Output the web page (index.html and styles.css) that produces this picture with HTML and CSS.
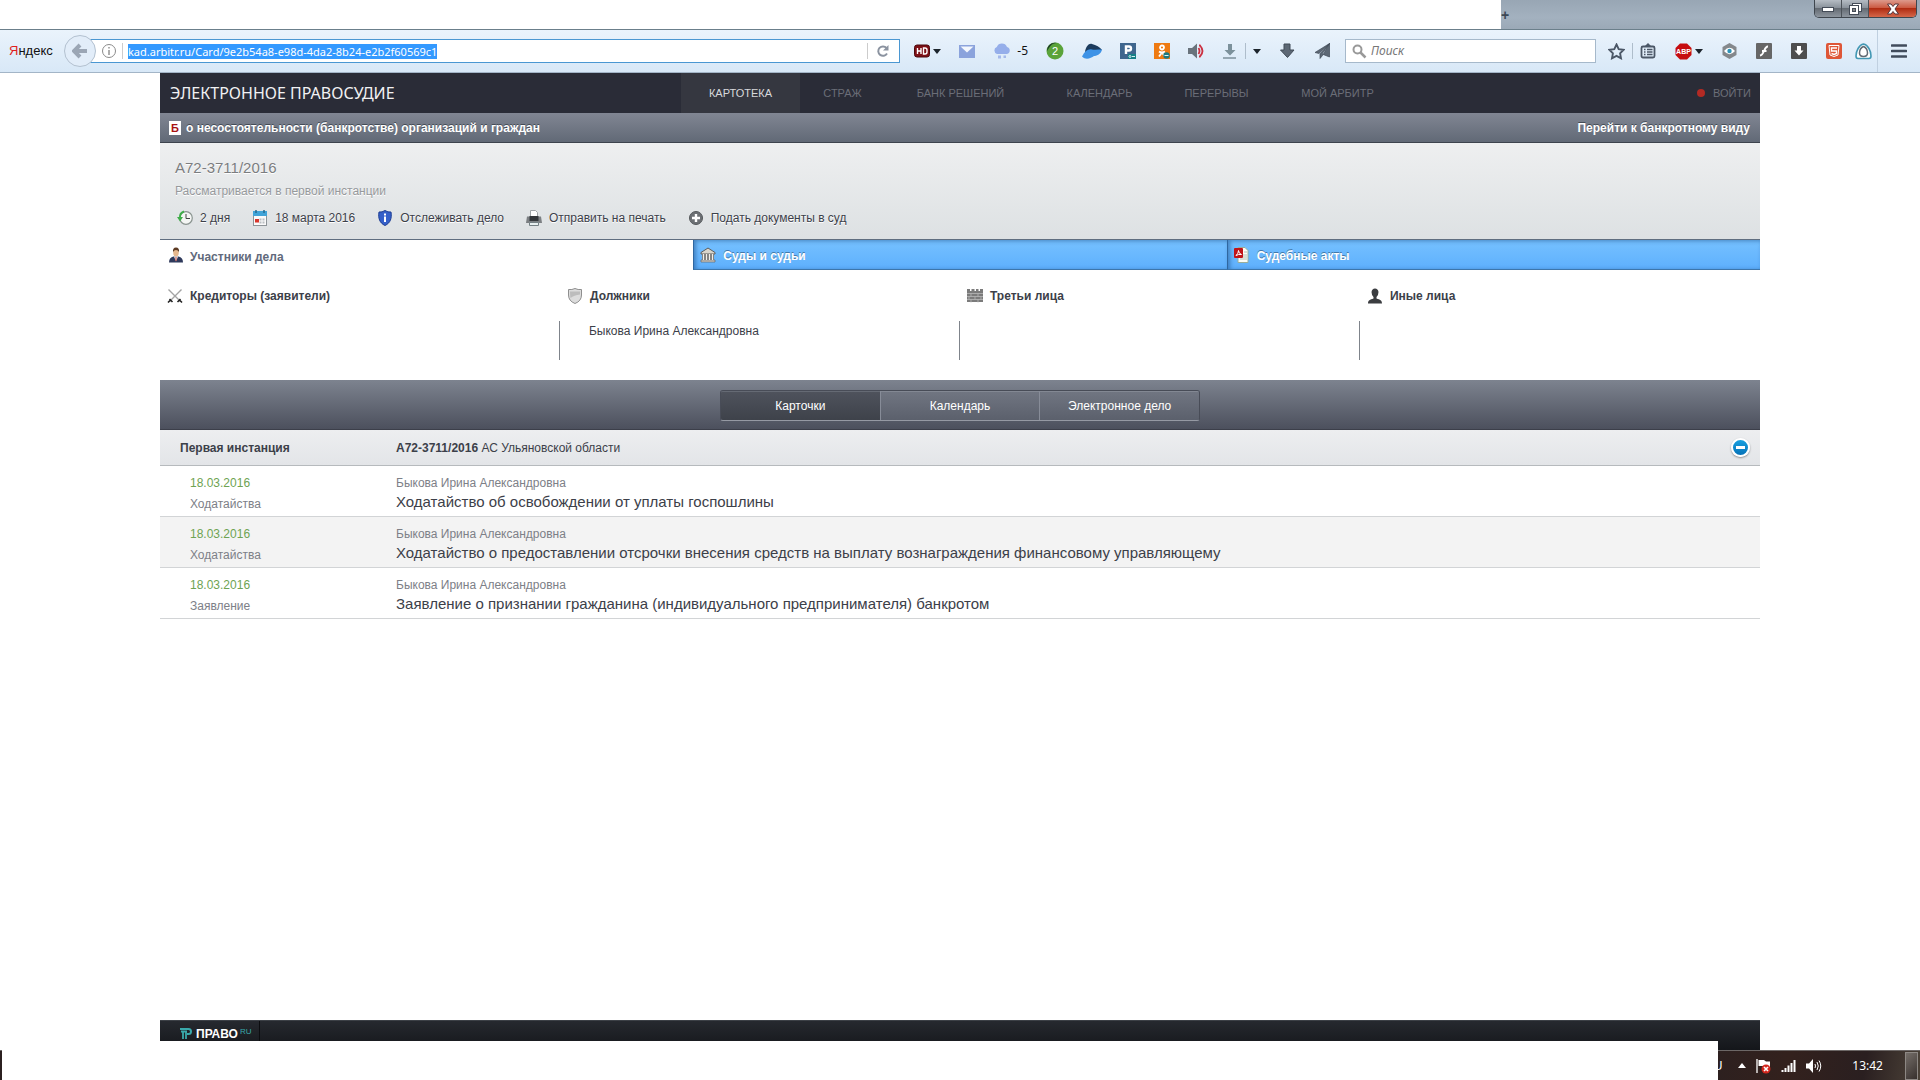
FILE: index.html
```html
<!DOCTYPE html>
<html lang="ru">
<head>
    <meta charset="UTF-8">
    <meta name="viewport" content="width=device-width, initial-scale=1.0">
    <title>А72-3711/2016 - Электронное правосудие</title>
    <link rel="stylesheet" href="styles.css">
</head>
<body>
    <div class="titlebar">
        <div class="tabs-blank"></div>
        <div class="glass">
            <span class="new-tab">+</span>
            <div class="window-buttons">
                <button class="win-btn" aria-label="Свернуть"><svg width="12" height="6"><rect x="0.5" y="1.5" width="11" height="4" fill="#fff" stroke="#444c58"/></svg></button>
                <button class="win-btn" aria-label="Развернуть"><svg width="13" height="12"><rect x="3.5" y="0.5" width="9" height="8" fill="#fff" stroke="#444c58"/><rect x="0.5" y="2.5" width="9" height="9" fill="#fff" stroke="#444c58"/><rect x="3.5" y="5.5" width="3" height="3" fill="#888" stroke="#444c58"/></svg></button>
                <button class="win-btn win-close" aria-label="Закрыть"><svg width="14" height="12" viewBox="0 0 14 12"><path d="M1.5 1h3.5l2 2.5L9 1h3.5L9 6l3.5 5H9L7 8.5 5 11H1.5L5 6z" fill="#fff" stroke="#54343a"/></svg></button>
            </div>
        </div>
    </div>

    <div class="toolbar">
        <a class="yandex" href="#"><span>Я</span>ндекс</a>
        <form class="address">
            <button type="button" class="back" aria-label="Назад"><svg width="16" height="16" viewBox="0 0 16 16"><path d="M8 2L2 8l6 6M2.5 8H15" fill="none" stroke="#9ba6b5" stroke-width="4"/></svg></button>
            <svg class="info" width="16" height="16" viewBox="0 0 16 16"><circle cx="8" cy="8" r="6.5" fill="none" stroke="#8b8b8b"/><path d="M8 7v5M8 4v1.5" stroke="#8b8b8b" stroke-width="1.4"/></svg>
            <div class="url"><span>kad.arbitr.ru/Card/9e2b54a8-e98d-4da2-8b24-e2b2f60569c1</span></div>
            <button type="button" class="reload" aria-label="Обновить"><svg width="14" height="14" viewBox="0 0 14 14"><path d="M11 9.5A4.7 4.7 0 1 1 10.5 4" fill="none" stroke="#8b93a0" stroke-width="2"/><path d="M12.5 1v5.5H7z" fill="#8b93a0"/></svg></button>
        </form>

        <div class="tools">
            <button class="tool" aria-label="HD">
                <svg width="16" height="14" viewBox="0 0 16 14"><rect x="0.5" y="1" width="15" height="12" rx="2.5" fill="#7d1016" stroke="#4c080c"/><path d="M3.5 4v6M7 4v6M3.5 7H7M9.5 4v6h1.5a2 2 0 0 0 2-2V6a2 2 0 0 0-2-2z" fill="none" stroke="#fff" stroke-width="1.4"/></svg>
                <svg class="caret" width="8" height="5"><path d="M0 0h8L4 5z" fill="#1c242c"/></svg>
            </button>
            <button class="tool" aria-label="Почта"><svg width="16" height="13" viewBox="0 0 16 13"><rect width="16" height="13" fill="#8ba3dc"/><path d="M1.5 1.5h13L8 7.5z" fill="#f3f7fd"/></svg></button>
            <button class="tool weather">
                <svg width="18" height="17" viewBox="0 0 18 17"><path d="M4 11a3.7 3.7 0 0 1-.2-7A5.5 5.5 0 0 1 14 4a3.6 3.6 0 0 1 0 7z" fill="#95aeea"/><path d="M5 12.5h3v3H5zM10.5 12.5h2.5v2.5h-2.5z" fill="#a4b8ea"/></svg>
                -5
            </button>
            <button class="tool" aria-label="Уведомления"><svg width="18" height="18" viewBox="0 0 18 18"><circle cx="9" cy="9" r="8.5" fill="#5aa33a"/><path d="M1 9a8 8 0 0 1 10-8C5 1 4 5 1 9z" fill="#1d3a2a"/><text x="9" y="13" class="badge-num">2</text></svg></button>
            <button class="tool" aria-label="Облако"><svg width="20" height="17" viewBox="0 0 20 17"><path d="M3 9C4 3 7 0 10 1c4 1 8 3 10 6l-8 2z" fill="#1c3c5e"/><path d="M0 13.5C3 8 6 5.500 10 6.500c3 .5 7 0 10 0-1 5-6 6.500-8 6.500-3 2-8 4.500-12 .5z" fill="#3d92e6"/></svg></button>
            <button class="tool" aria-label="P"><svg width="16" height="16" viewBox="0 0 16 16"><rect width="16" height="16" fill="#3f668e"/><path d="M6 11V3.5h3a2 2 0 0 1 0 4H6" fill="none" stroke="#fff" stroke-width="2.4"/><path d="M8 11h8v5H8z" fill="#167f86"/><path d="M9 13.5a1 1 0 1 0 2 0a1 1 0 1 0-2 0M12 13.5h3" fill="none" stroke="#d8f0f0"/></svg></button>
            <button class="tool" aria-label="Одноклассники"><svg width="16" height="16" viewBox="0 0 16 16"><rect width="16" height="16" fill="#ee7a12"/><circle cx="8" cy="4.5" r="2" fill="none" stroke="#fff" stroke-width="1.8"/><path d="M5 8.500q3 2 6 0M8 9.500l-3 4M8 9.500l3 4" fill="none" stroke="#fff" stroke-width="1.8"/><circle cx="12.500" cy="12.500" r="3.200" fill="#1c7a80"/><path d="M10.500 12.500h4" stroke="#e4f4f4"/></svg></button>
            <button class="tool" aria-label="Звук"><svg width="16" height="16" viewBox="0 0 16 16"><path d="M0 5h4l5-4.5v15L4 11H0z" fill="#69737c"/><path d="M10.500 5q2 3 0 6M11 2.500h1q5 5.500 0 11h-1" fill="none" stroke="#cb3040" stroke-width="1.8"/></svg></button>
            <button class="tool" aria-label="Загрузить">
                <svg width="16" height="16" viewBox="0 0 16 16"><path d="M6 1h4v6h3.5L8 12.500 2.500 7H6z" fill="#7c919b"/><path d="M1 15h13" stroke="#7c919b" stroke-width="1.5"/></svg>
                <i class="sep"></i>
                <svg class="caret" width="8" height="5"><path d="M0 0h8L4 5z" fill="#1c242c"/></svg>
            </button>
            <button class="tool" aria-label="Загрузки"><svg width="17" height="16" viewBox="0 0 17 16"><path d="M5 1h6v6h4l-6.500 7.500L1.500 7H5z" fill="#5d6875" stroke="#414b57"/></svg></button>
            <button class="tool" aria-label="Отправить"><svg width="17" height="16" viewBox="0 0 17 16"><path d="M15.500.5L1 9.500l4 1zM15.500.5L6 11v4.500l2.500-3zM15.500.5V14L8 11z" fill="#5d6875" stroke="#414b57" stroke-width=".7"/></svg></button>
        </div>

        <div class="search">
            <svg width="15" height="15" viewBox="0 0 15 15"><circle cx="5.500" cy="5.500" r="4" fill="none" stroke="#999" stroke-width="2"/><path d="M8.500 8.500l5 5" stroke="#999" stroke-width="2.5"/></svg>
            <input type="text" placeholder="Поиск" aria-label="Поиск">
        </div>

        <div class="tools tools-right">
            <button class="tool" aria-label="Закладки">
                <svg width="17" height="17" viewBox="0 0 17 17"><path d="M8.500 1.500l2.200 4.600 5 .7-3.600 3.500.9 5-4.500-2.400L4 15.300l.9-5L1.300 6.800l5-.7z" fill="none" stroke="#4b5767" stroke-width="1.9"/></svg>
                <i class="sep"></i>
                <svg width="16" height="16" viewBox="0 0 16 16"><path d="M3 3.500h10a1.500 1.500 0 0 1 1.500 1.500v8a1.500 1.500 0 0 1-1.500 1.500H3A1.500 1.500 0 0 1 1.500 13V5A1.500 1.500 0 0 1 3 3.500z" fill="none" stroke="#4b5767" stroke-width="1.800"/><path d="M5 3L8 0l3 3z" fill="#4b5767"/><path d="M4 6.500h1.500M4 9h1.500M4 11.500h1.500M7 6.500h5.500M7 9h5.500M7 11.500h5.500" stroke="#4b5767" stroke-width="1.300"/></svg>
            </button>
            <button class="tool" aria-label="Adblock Plus">
                <svg width="17" height="17" viewBox="0 0 17 17"><path d="M5 .5h7L16.500 5v7L12 16.500H5L.5 12V5z" fill="#c60d10"/><text x="8.500" y="11" class="abp">ABP</text></svg>
                <svg class="caret" width="8" height="5"><path d="M0 0h8L4 5z" fill="#1c242c"/></svg>
            </button>
            <button class="tool" aria-label="Просмотр"><svg width="15" height="16" viewBox="0 0 15 16"><path d="M7.500 0l7 4v8l-7 4-7-4V4z" fill="#84888c"/><path d="M2 8q5.500-6.500 11 0-5.500 6.500-11 0z" fill="#fff"/><circle cx="7.500" cy="8" r="2.200" fill="#2e93b8"/></svg></button>
            <button class="tool" aria-label="Flash"><svg width="16" height="16" viewBox="0 0 16 16"><rect width="16" height="16" rx="1" fill="#666"/><path d="M12 3.500c-4-.5-3.500 8.500-8 9M6 8h4.500" fill="none" stroke="#fff" stroke-width="1.8"/></svg></button>
            <button class="tool" aria-label="Скачать"><svg width="16" height="16" viewBox="0 0 16 16"><rect width="16" height="16" rx="1" fill="#4e4e4e"/><path d="M6 3h4v4.500h2.500L8 12.500 3.500 7.500H6z" fill="#fff"/></svg></button>
            <button class="tool" aria-label="HTML5"><svg width="16" height="16" viewBox="0 0 16 16"><rect width="16" height="16" rx="2" fill="#de5637"/><path d="M3 2.500h10l-1 9.500-4 1.500L4 12z" fill="none" stroke="#fff"/><path d="M11 5H5.500v3h5v2.500L8 11.500l-2.500-1" fill="none" stroke="#fff" stroke-width="1.4"/></svg></button>
            <button class="tool" aria-label="Расширение"><svg width="17" height="17" viewBox="0 0 17 17"><path d="M8.500 1C13 2 16 8 16 13q0 2.500-2 2.500H3q-2 0-2-2.500C1 8 4 2 8.500 1z" fill="#fff" stroke="#4398b4" stroke-width="1.6"/><path d="M8.500 3.500c2.500 1 4 4 4 6.500s-1.500 3.500-4 3.500-4-1-4-3.500 1.500-5.500 4-6.500z" fill="none" stroke="#626b74" stroke-width="1.5"/></svg></button>
        </div>
        <button class="tool menu" aria-label="Меню"><svg width="16" height="14" viewBox="0 0 16 14"><path d="M1 1.500h14M1 7h14M1 12.500h14" stroke="#414c5c" stroke-width="2.6" stroke-linecap="round"/></svg></button>
    </div>

    <div class="page">
        <header class="header">
            <h1>ЭЛЕКТРОННОЕ ПРАВОСУДИЕ</h1>
            <nav class="nav">
                <a class="active" href="#">КАРТОТЕКА</a>
                <a href="#">СТРАЖ</a>
                <a href="#">БАНК РЕШЕНИЙ</a>
                <a href="#">КАЛЕНДАРЬ</a>
                <a href="#">ПЕРЕРЫВЫ</a>
                <a href="#">МОЙ АРБИТР</a>
            </nav>
            <a class="login" href="#">ВОЙТИ</a>
        </header>

        <div class="band">
            <span class="b-icon">Б</span>
            <span>о несостоятельности (банкротстве) организаций и граждан</span>
            <a href="#">Перейти к банкротному виду</a>
        </div>

        <section class="case">
            <h2>А72-3711/2016</h2>
            <p>Рассматривается в первой инстанции</p>
            <ul class="actions">
                <li>
                    <svg width="16" height="16" viewBox="0 0 16 16"><circle cx="9" cy="8" r="6.300" fill="#f4f6f4" stroke="#8a9490" stroke-width="1.2"/><path d="M9 4v4.500h4" fill="none" stroke="#444"/><path d="M7 1.500Q2.500 3 3 8" fill="none" stroke="#3fae49" stroke-width="2"/><path d="M0 7h6l-3 4.500z" fill="#3fae49"/></svg>
                    2 дня
                </li>
                <li>
                    <svg width="16" height="16" viewBox="0 0 16 16"><rect x="1.500" y="1.500" width="13" height="14" fill="#fafafa" stroke="#8d9498"/><path d="M1 1h14v5H1z" fill="#41a4d8"/><path d="M4 0v3M12 0v3" stroke="#26698e" stroke-width="1.5"/><path d="M7.500 8.500h2v2h-2zM10.500 8.500h2v2h-2zM7.500 11.500h2v2h-2zM10.500 11.500h2v2h-2z" fill="#b9bec2"/><path d="M3 9h4v3.500H3z" fill="#d8362c"/></svg>
                    18 марта 2016
                </li>
                <li>
                    <a href="#"><svg width="16" height="16" viewBox="0 0 16 16"><path d="M8 .5q3 2 6 1.500c1 6-.5 11-6 13.500C2.500 13 1 8 2 2q3 .5 6-1.500z" fill="#3560c9" stroke="#1d3d93"/><path d="M8 6.500V12M8 3.500v2" stroke="#fff" stroke-width="2"/></svg>
                    Отслеживать дело</a>
                </li>
                <li>
                    <a href="#"><svg width="16" height="16" viewBox="0 0 16 16"><path d="M4.500 7V.5h5l2 2V7z" fill="#fff" stroke="#a0a5a8"/><path d="M1 6.500h14l1 6.500H0z" fill="#7c8083"/><path d="M3.500 6h9v5h-9z" fill="#33373a"/><path d="M3.500 12.500h9v3h-9z" fill="#e8f0f0" stroke="#748084"/></svg>
                    Отправить на печать</a>
                </li>
                <li>
                    <a href="#"><svg width="16" height="16" viewBox="0 0 16 16"><circle cx="8" cy="8" r="6.500" fill="#6c7074" stroke="#54585b"/><path d="M8 4v8M4 8h8" stroke="#fff" stroke-width="2.4"/></svg>
                    Подать документы в суд</a>
                </li>
            </ul>
        </section>

        <div class="tabs">
            <button class="tab selected">
                <svg width="16" height="16" viewBox="0 0 16 16"><path d="M1 15.500q0-5 4.500-6h5q4.500 1 4.500 6z" fill="#2f3a5c"/><path d="M6 9.500h4l-2 5z" fill="#fff"/><path d="M7.500 10h1v4h-1z" fill="#c03a2c"/><ellipse cx="8" cy="5.500" rx="2.800" ry="4" fill="#e7b88e"/><path d="M5 5Q4.500.5 8 .5T11 5Q10 3 8 3T5 5z" fill="#5c3a22"/></svg>
                <span>Участники дела</span>
            </button>
            <button class="tab">
                <svg width="16" height="16" viewBox="0 0 16 16"><path d="M8 1l7 4.500v1.500H1V5.500z" fill="#d9d5cc" stroke="#5c5c5c"/><path d="M1 13h14v2H1z" fill="#d4d0c8" stroke="#666" stroke-width=".7"/><path d="M2 7h12v6H2z" fill="#6a6a6a"/><path d="M3.500 7v6M6.500 7v6M9.500 7v6M12.500 7v6" stroke="#f0eee9" stroke-width="1.4"/></svg>
                <span>Суды и судьи</span>
            </button>
            <button class="tab">
                <svg width="16" height="16" viewBox="0 0 16 16"><path d="M4 .5h7l3 3v12H4z" fill="#fbfdf6" stroke="#9aae9a"/><path d="M9 8h4M9 10h4M6 12h7M10 5h3" stroke="#b4beb4"/><rect y="1" width="9" height="10" rx="1" fill="#c01418"/><path d="M2 8.500q2.500-2 2.500-5 0 3 3 4-3-.5-5.500 1z" fill="none" stroke="#fff"/></svg>
                <span>Судебные акты</span>
            </button>
        </div>

        <section class="sides">
            <div class="side">
                <h3><svg width="16" height="16" viewBox="0 0 16 16"><path d="M1.500 1.500l12 12M14.500 1.500l-12 12" stroke="#a3a3a3" stroke-width="1.4"/><path d="M2.500 11l3 3M13.500 11l-3 3M1 14.500l2-2M15 14.500l-2-2" stroke="#222" stroke-width="1.6"/></svg>
                Кредиторы (заявители)</h3>
                <div class="people"></div>
            </div>
            <div class="side">
                <h3><svg width="16" height="16" viewBox="0 0 16 16"><path d="M1.500 1.500Q5 2 8 .5q3 1.500 6.500 1V7q0 6-6.500 8.500Q1.500 13 1.500 7z" fill="#dcdcdc" stroke="#8e8e8e"/><path d="M3 3.500h10v3Q7 7 3.500 10 3 7 3 3.500z" fill="#bcbcbc"/></svg>
                Должники</h3>
                <div class="people">Быкова Ирина Александровна</div>
            </div>
            <div class="side">
                <h3><svg width="16" height="16" viewBox="0 0 16 16"><path d="M0 1h3v2h1.500V1h3v2H9V1h2.500v2H13V1h3v13H0z" fill="#7b7b7b"/><path d="M0 5.500h16M0 8.500h16M0 11.500h16M4 5.500v3M11 5.500v3M2 8.500v3M8 8.500v3M14 8.500v3M4 11.500v3M11 11.500v3" stroke="#b7b7b7" stroke-width=".8"/></svg>
                Третьи лица</h3>
                <div class="people"></div>
            </div>
            <div class="side">
                <h3><svg width="16" height="16" viewBox="0 0 16 16"><path d="M1 15.500c0-3 2-4 5.500-5V9Q4.500 7 4.500 4 5 .5 8 .5T11.500 4q0 3-2 5v1.500c3.500 1 5.500 2 5.500 5z" fill="#3b3d40"/></svg>
                Иные лица</h3>
                <div class="people"></div>
            </div>
        </section>

        <div class="views">
            <div class="switch">
                <button class="on">Карточки</button>
                <button>Календарь</button>
                <button>Электронное дело</button>
            </div>
        </div>

        <div class="instance">
            <b class="level">Первая инстанция</b>
            <span class="court"><b>А72-3711/2016</b> АС Ульяновской области</span>
            <button class="collapse" aria-label="Свернуть"></button>
        </div>

        <table class="docs">
            <tr>
                <td class="when"><span class="date">18.03.2016</span><span class="type">Ходатайства</span></td>
                <td><span class="who">Быкова Ирина Александровна</span><span class="what">Ходатайство об освобождении от уплаты госпошлины</span></td>
            </tr>
            <tr>
                <td class="when"><span class="date">18.03.2016</span><span class="type">Ходатайства</span></td>
                <td><span class="who">Быкова Ирина Александровна</span><span class="what">Ходатайство о предоставлении отсрочки внесения средств на выплату вознаграждения финансовому управляющему</span></td>
            </tr>
            <tr>
                <td class="when"><span class="date">18.03.2016</span><span class="type">Заявление</span></td>
                <td><span class="who">Быкова Ирина Александровна</span><span class="what">Заявление о признании гражданина (индивидуального предпринимателя) банкротом</span></td>
            </tr>
        </table>

        <footer class="footer">
            <a class="pravo" href="#">
                <svg width="12" height="11" viewBox="0 0 12 11"><path d="M0 1h8.500a2.500 2.500 0 0 1 0 5H7" fill="none" stroke="#3aa9ab" stroke-width="2"/><path d="M1 3.500h6M3 4v7M6 4v7" fill="none" stroke="#3aa9ab" stroke-width="1.800"/></svg>
                <b>ПРАВО</b><sup>RU</sup>
            </a>
        </footer>
    </div>

    <div class="taskbar">
        <span class="lang">U</span>
        <svg width="8" height="5"><path d="M0 5h8L4 0z" fill="#fff"/></svg>
        <svg width="15" height="16" viewBox="0 0 15 16"><path d="M1 1v14" stroke="#fff" stroke-width="1.3"/><path d="M2.500 2H8l2 1.500h4V9H8L7 8H2.500z" fill="#fff"/><circle cx="10" cy="11" r="4.500" fill="#d3281e"/><path d="M8 9l4 4M12 9l-4 4" stroke="#fff" stroke-width="1.6"/></svg>
        <svg width="15" height="12" viewBox="0 0 15 12"><path d="M1.500 10v2M4.500 8v4M7.500 5.500V12M10.500 3v9M13.500 0v12" stroke="#fff" stroke-width="2"/></svg>
        <svg width="16" height="14" viewBox="0 0 16 14"><path d="M0 4.500h3L7 0v14L3 9.500H0z" fill="#fff"/><path d="M9 5q1 2 0 4M11 3q2.500 4 0 8M13 1.500q3.500 5.500 0 11" fill="none" stroke="#fff"/></svg>
        <time>13:42</time>
        <button class="show-desktop" aria-label="Свернуть все окна"></button>
        <div class="cover"></div>
    </div>
</body>
</html>
```
FILE: styles.css
```css
* {
    box-sizing: border-box;
}

body {
    margin: 0;
    min-height: 100vh;
    display: flex;
    flex-direction: column;
    background: #fff;
    color: #3c4049;
    font: 12px/18px "Liberation Sans", Arial, sans-serif;
}

button {
    font: inherit;
    color: inherit;
    border: 0;
    padding: 0;
    background: none;
    cursor: pointer;
}

a {
    color: inherit;
    text-decoration: none;
}

h1, h2, h3, p, ul {
    margin: 0;
    padding: 0;
}

svg {
    display: block;
    flex: none;
}

/* window frame */
.titlebar {
    display: flex;
    height: 29px;
}

.tabs-blank {
    flex: 1;
}

.glass {
    display: flex;
    justify-content: space-between;
    align-items: flex-start;
    width: 419px;
    padding-right: 3px;
    background: linear-gradient(#98a6b4, #a3b1bf 60%, #9ba9b7);
}

.new-tab {
    color: #3c4854;
    font-size: 14px;
    font-weight: bold;
    line-height: 30px;
}

.window-buttons {
    display: flex;
    height: 18px;
    border: 1px solid #3f464e;
    border-top: 0;
    border-radius: 0 0 5px 5px;
    overflow: hidden;
}

.win-btn {
    display: flex;
    align-items: center;
    justify-content: center;
    width: 27px;
    background: linear-gradient(#b5bcc4, #8a929b 45%, #646b73 50%, #8d959e);
    border-right: 1px solid #4c5259;
}

.win-close {
    width: 47px;
    border-right: 0;
    background: linear-gradient(#dd9a8c, #cc5b43 45%, #b02c12 50%, #d5674a);
}

/* browser toolbar */
.toolbar {
    display: flex;
    align-items: center;
    height: 44px;
    padding: 0 13px 0 9px;
    border-top: 1px solid #6b7f8b;
    border-bottom: 1px solid #a3b5c7;
    background: linear-gradient(#eaf3fc, #d8e8f7);
    color: #111;
}

.yandex {
    width: 55px;
    font-size: 13px;
    line-height: 20px;
}

.yandex span {
    color: #e01f1f;
}

.address {
    display: flex;
    align-items: center;
    flex: 1;
}

.back {
    position: relative;
    display: flex;
    align-items: center;
    justify-content: center;
    width: 32px;
    height: 32px;
    margin-right: -8px;
    border: 1px solid #b3c1d0;
    border-radius: 50%;
    background: #e2edf9;
}

.info {
    order: 1;
    width: 34px;
    height: 24px;
    padding: 3px 4px 3px 12px;
    border: solid #4a97d2;
    border-width: 1px 0;
    background: #fff;
}

.url {
    order: 2;
    flex: 1;
    height: 24px;
    padding: 4px 0 4px 6px;
    border: solid #4a97d2;
    border-width: 1px 0;
    background: linear-gradient(#ccc, #ccc) 0 50% / 1px 16px no-repeat #fff;
    font: 11px/15px "Noto Sans", sans-serif;
}

.url span {
    display: inline-block;
    height: 15px;
    background: #3399ff;
    color: #fff;
}

.reload {
    order: 3;
    display: flex;
    align-items: center;
    justify-content: center;
    width: 33px;
    height: 24px;
    border: 1px solid #4a97d2;
    border-left: 0;
    background: linear-gradient(#ccc, #ccc) 0 50% / 1px 16px no-repeat #fff;
}

.tools {
    display: flex;
    align-items: center;
    gap: 18px;
    padding: 0 14px;
}

.tools-right {
    gap: 19px;
    padding: 0 5px 0 12px;
}

.tools-right .tool:last-child {
    margin-left: -6px;
}

.tool {
    display: flex;
    align-items: center;
    gap: 3px;
}

.tool .sep {
    width: 1px;
    height: 16px;
    margin: 0 4px;
    background: #aebdcb;
}

.weather {
    gap: 6px;
    font: 12px/16px "Noto Sans", sans-serif;
}

.badge-num {
    font: 11px "Liberation Sans", sans-serif;
    fill: #fff;
    text-anchor: middle;
}

.abp {
    font: bold 7px "Liberation Sans", sans-serif;
    fill: #fff;
    text-anchor: middle;
}

.search {
    display: flex;
    align-items: center;
    gap: 4px;
    width: 251px;
    height: 24px;
    padding-left: 6px;
    border: 1px solid #a6b9cb;
    background: #fff;
}

.search input {
    flex: 1;
    min-width: 0;
    border: 0;
    padding: 0;
    outline: none;
    background: none;
    font: italic 12px/18px "Noto Sans", sans-serif;
}

.search input::placeholder {
    color: #777;
}

.menu {
    height: 42px;
    padding-left: 13px;
    border-left: 1px solid #c0d0e0;
}

/* site */
.page {
    flex: 1;
    display: flex;
    flex-direction: column;
    width: 83.3333%;
    margin: 0 auto;
}

.header {
    display: flex;
    align-items: stretch;
    height: 40px;
    padding: 0 9px 0 10px;
    background: #2a2c37;
    line-height: 40px;
}

.header h1 {
    width: 511px;
    color: #f1f1f3;
    font: 16px/40px "Noto Sans", sans-serif;
}

.nav {
    display: grid;
    grid-template-columns: 119px 85px 151px 127px 107px 135px;
    flex: 1;
    font-size: 11px;
    color: #6b6e78;
    text-align: center;
}

.nav .active {
    background: #353740;
    color: #d8d9dc;
}

.login {
    display: flex;
    align-items: center;
    gap: 8px;
    color: #6b6e78;
    font-size: 11px;
}

.login::before {
    content: "";
    width: 8px;
    height: 8px;
    border-radius: 50%;
    background: #b32a24;
}

.band {
    display: flex;
    align-items: center;
    gap: 5px;
    height: 30px;
    padding: 1px 10px 0 9px;
    border-bottom: 1px solid #3d434d;
    background: linear-gradient(#818693, #616976);
    color: #fff;
    font-weight: bold;
    text-shadow: 0 -1px 0 #444b56;
}

.band a {
    margin-left: auto;
}

.b-icon {
    width: 12px;
    background: #fff;
    color: #a81313;
    font-size: 11px;
    line-height: 14px;
    text-align: center;
    text-shadow: none;
}

.case {
    padding: 15px 15px 12px;
    border-bottom: 1px solid #5f6e80;
    background: linear-gradient(#eeeff0, #dde1e3);
    text-shadow: 0 1px 0 #fff;
}

.case h2 {
    color: #7b7d80;
    font-size: 15px;
    font-weight: normal;
    line-height: 20px;
}

.case p {
    margin: 4px 0 9px;
    color: #96999c;
}

.actions {
    display: flex;
    gap: 22px;
    padding: 0 2px;
    list-style: none;
}

.actions li, .actions a {
    display: flex;
    align-items: center;
    gap: 7px;
}

.tabs {
    display: grid;
    grid-template-columns: repeat(3, 1fr);
}

.tab {
    display: flex;
    align-items: center;
    gap: 7px;
    height: 30px;
    padding: 0 6px;
    border-bottom: 1px solid #3d76ab;
    border-left: 1px solid #2f67a0;
    background: linear-gradient(#76c1ff, #5eb0fd);
    box-shadow: inset 2px 1px 4px rgba(20, 70, 130, 0.5);
    color: #fff;
    font-weight: bold;
    text-shadow: 0 -1px 0 #4478a8;
}

.tab span {
    padding-top: 3px;
}

.tab.selected {
    gap: 6px;
    padding-left: 8px;
    border: 0;
    background: #fff;
    box-shadow: none;
    color: #626a7c;
    text-shadow: none;
}

.sides {
    display: grid;
    grid-template-columns: repeat(4, 1fr);
    padding: 17px 0 20px;
}

.side h3 {
    display: flex;
    align-items: center;
    gap: 7px;
    height: 18px;
    margin-bottom: 16px;
    padding-left: 7px;
    font-size: 12px;
}

.people {
    height: 39px;
    margin-left: -1px;
    padding: 1px 0 0 29px;
    border-left: 1px solid #7f848b;
}

.side:first-child .people {
    border-color: transparent;
}

.views {
    display: flex;
    justify-content: center;
    padding: 10px 0 8px;
    border-bottom: 1px solid #3c3f4a;
    background: linear-gradient(#7d838f, #4c505d);
}

.switch {
    display: flex;
    width: 480px;
    height: 31px;
    border: 1px solid #484c57;
    border-bottom-color: #9599a3;
    border-radius: 3px;
    overflow: hidden;
    color: #fff;
}

.switch button {
    flex: 1;
    border-left: 1px solid #878c98;
    background: linear-gradient(#717682, #5b606c);
    box-shadow: inset 0 1px 0 #838893;
}

.switch .on {
    border-left: 0;
    background: linear-gradient(#4f535d, #3e424a);
    box-shadow: inset 0 1px 0 #656a74;
}

.instance {
    display: flex;
    align-items: center;
    height: 36px;
    padding: 0 10px 0 20px;
    border-bottom: 1px solid #b6babd;
    background: linear-gradient(#edeef0, #e3e5e8);
}

.level {
    width: 216px;
}

.court {
    flex: 1;
}

.collapse {
    width: 19px;
    height: 19px;
    border: 2px solid #fff;
    border-radius: 50%;
    background: linear-gradient(#fff, #fff) 50% 50% / 9px 3px no-repeat, linear-gradient(#18a0e0, #0672b8);
    box-shadow: 0 1px 2px rgba(0, 0, 0, 0.4);
}

.docs {
    width: 100%;
    border-collapse: separate;
    border-spacing: 0;
}

.docs td {
    padding: 8px 0 0;
    border-bottom: 1px solid #d2d4d6;
    vertical-align: top;
}

.docs tr:nth-child(even) {
    background: #f3f3f3;
}

.docs .when {
    width: 236px;
    padding-left: 30px;
}

.docs span {
    display: block;
    color: #7d8087;
}

.docs .date {
    color: #6ea352;
}

.docs .type {
    line-height: 24px;
}

.docs .what {
    color: #3c4049;
    font-size: 15px;
    line-height: 20px;
}

.footer {
    display: flex;
    height: 30px;
    margin-top: auto;
    border-top: 1px solid #3c4046;
    background: linear-gradient(#26292f, #14161a);
}

.pravo {
    display: flex;
    align-items: center;
    gap: 2px;
    width: 100px;
    padding: 0 0 4px 20px;
    border-right: 1px solid #0b0c0f;
    color: #fff;
}

.pravo b {
    margin-left: 2px;
    font-size: 12px;
}

.pravo sup {
    padding-bottom: 4px;
    color: #3aa9ab;
    font-size: 8px;
    line-height: 10px;
}

/* windows taskbar */
.taskbar {
    position: relative;
    display: flex;
    align-items: center;
    justify-content: flex-end;
    gap: 10px;
    height: 30px;
    padding-right: 2px;
    border-top: 1px solid #6c6766;
    background: linear-gradient(100deg, #2b2020 88%, #33211d 93%, #2a1f20 97%, #4b4238);
    color: #fff;
}

.lang {
    margin-right: 6px;
}

.taskbar time {
    margin: 0 12px 0 20px;
    font: 12px/18px "Noto Sans", sans-serif;
}

.show-desktop {
    width: 13px;
    height: 28px;
    border: 1px solid #8d8884;
    background: linear-gradient(135deg, #756e69, #37302d);
}

/* white area over the left part of the taskbar and the footer edge */
.cover {
    position: absolute;
    left: 2px;
    right: 202px;
    bottom: 0;
    height: 39px;
    background: #fff;
}
```
